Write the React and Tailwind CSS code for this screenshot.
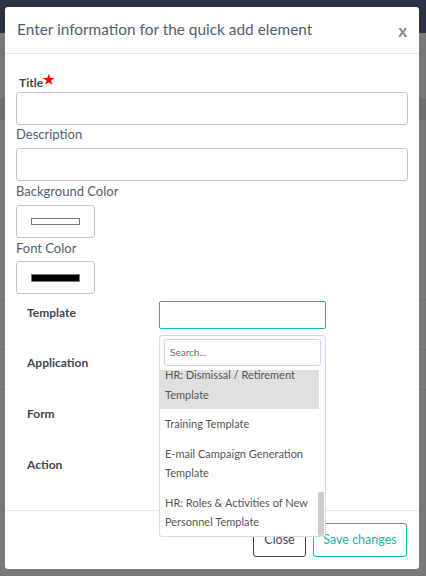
import React from "react";

const font = { fontFamily: "Lato, 'Noto Sans', sans-serif" };

export default function App() {
  return (
    <div className="relative w-[426px] h-[576px] overflow-hidden bg-[#787878]" style={font}>
      {/* background page */}
      <div className="h-[33px] bg-[#2b3242]" />
      <div className="flex flex-col">
        <div className="h-[67px] border-b border-[#6a6a6a]" />
        <div className="h-[20px] bg-[#6e6e6e]" />
        <div className="h-[180px] border-b border-[#6d6d6d]" />
        <div className="h-[50px] border-b border-[#6d6d6d]" />
        <div className="h-[40px] border-b border-[#6d6d6d]" />
      </div>

      {/* modal */}
      <div className="absolute left-[5px] top-[7px] w-[414px] h-[562px] bg-white rounded-[3px] flex flex-col">
        <div className="h-[47px] flex items-center justify-between pl-[12px] pr-[12px] border-b border-[#e5e7eb]">
          <span className="text-[15.4px] text-[#525e70]">Enter information for the quick add element</span>
          <span className="text-[17px] font-bold text-[#8a8a8a] leading-none">x</span>
        </div>

        <div className="flex-1 relative px-[11px] pt-[20px]">
          <div className="text-[12px] font-bold text-[#3f4654] leading-[16px] pl-[3px]">
            Title<span className="text-[#ff0000] text-[13px] relative -top-[3px]">★</span>
          </div>
          <div className="mt-[1px] h-[33px] border border-[#c3c6cd] rounded-[3px]" />
          <div className="mt-[0px] text-[13px] text-[#525e70] leading-[18px]">Description</div>
          <div className="mt-[5px] h-[33px] border border-[#c3c6cd] rounded-[3px]" />
          <div className="mt-[1px] text-[13px] text-[#525e70] leading-[18px]">Background Color</div>
          <div className="mt-[5px] w-[79px] h-[33px] border border-[#c3c6cd] rounded-[3px] flex items-center justify-center">
            <div className="w-[49px] h-[7px] border border-[#7a7a7a] bg-white" />
          </div>
          <div className="mt-[1px] text-[13px] text-[#525e70] leading-[18px]">Font Color</div>
          <div className="mt-[4px] w-[79px] h-[33px] border border-[#c3c6cd] rounded-[3px] flex items-center justify-center">
            <div className="w-[49px] h-[8px] border border-[#7a7a7a] bg-black" />
          </div>

          <div className="flex items-start pt-[7px]">
            <div className="w-[143px] pl-[11px] flex flex-col text-[12px] font-bold text-[#3f4654] leading-[16px]">
              <span className="mt-[4px]">Template</span>
              <span className="mt-[34px]">Application</span>
              <span className="mt-[35px]">Form</span>
              <span className="mt-[35px]">Action</span>
            </div>
            <div className="w-[167px] h-[28px] border border-[#1db3b0] rounded-[2px]" />
          </div>
        </div>

        <div className="h-[59px] border-t border-[#e5e7eb] flex items-start justify-end gap-[7px] pr-[12px] pt-[12px]">
          <button className="h-[34px] w-[53px] border border-[#3b4559] rounded-[3px] text-[12.5px] text-[#3b4559]">Close</button>
          <button className="h-[34px] w-[94px] border border-[#1db3b0] rounded-[3px] text-[12.5px] text-[#1db3b0]">Save changes</button>
        </div>
      </div>

      {/* dropdown menu */}
      <div className="absolute left-[159px] top-[335px] w-[167px] h-[202px] bg-white border border-[#d9d9e6] rounded-[3px] overflow-hidden flex flex-col">
        <div className="px-[4px] pt-[3px]">
          <div className="h-[27px] border border-[#d2d2f2] rounded-[3px] flex items-center pl-[5px] text-[10px] text-[#6b6b6b]">Search...</div>
        </div>
        <div className="relative mt-[4px] flex-1 overflow-hidden">
          <div className="flex flex-col w-[159px] text-[11px] text-[#555] leading-[19.5px]">
            <div className="bg-[#e0e0e0] -mt-[10px] pl-[5px] py-[5px]">
              <div>HR: Dismissal / Retirement</div>
              <div>Template</div>
            </div>
            <div className="pl-[5px] py-[5px]">Training Template</div>
            <div className="pl-[5px] py-[5px]">
              <div>E-mail Campaign Generation</div>
              <div>Template</div>
            </div>
            <div className="pl-[5px] py-[5px]">
              <div>HR: Roles &amp; Activities of New</div>
              <div>Personnel Template</div>
            </div>
          </div>
          <div className="absolute right-[1px] top-[122px] w-[6px] h-[44px] bg-[#cdcdcd] rounded-[2px]" />
        </div>
      </div>
    </div>
  );
}
